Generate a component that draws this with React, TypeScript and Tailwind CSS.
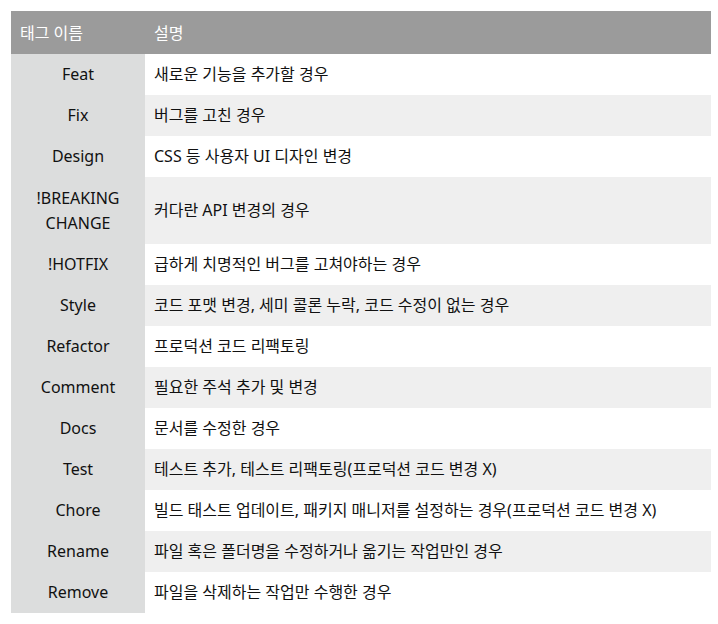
import React from "react";

const rows: { tag: string[]; desc: string }[] = [
  { tag: ["Feat"], desc: "새로운 기능을 추가할 경우" },
  { tag: ["Fix"], desc: "버그를 고친 경우" },
  { tag: ["Design"], desc: "CSS 등 사용자 UI 디자인 변경" },
  { tag: ["!BREAKING", "CHANGE"], desc: "커다란 API 변경의 경우" },
  { tag: ["!HOTFIX"], desc: "급하게 치명적인 버그를 고쳐야하는 경우" },
  { tag: ["Style"], desc: "코드 포맷 변경, 세미 콜론 누락, 코드 수정이 없는 경우" },
  { tag: ["Refactor"], desc: "프로덕션 코드 리팩토링" },
  { tag: ["Comment"], desc: "필요한 주석 추가 및 변경" },
  { tag: ["Docs"], desc: "문서를 수정한 경우" },
  { tag: ["Test"], desc: "테스트 추가, 테스트 리팩토링(프로덕션 코드 변경 X)" },
  { tag: ["Chore"], desc: "빌드 태스트 업데이트, 패키지 매니저를 설정하는 경우(프로덕션 코드 변경 X)" },
  { tag: ["Rename"], desc: "파일 혹은 폴더명을 수정하거나 옮기는 작업만인 경우" },
  { tag: ["Remove"], desc: "파일을 삭제하는 작업만 수행한 경우" },
];

export default function App() {
  return (
    <div
      className="bg-white w-[718px] h-[624px] pt-[11px] pl-[11px] text-[16px] text-[#111]"
      style={{ fontFamily: '"Noto Sans", "Noto Sans CJK KR", sans-serif' }}
    >
      <div className="w-[700px] flex flex-col">
        <div className="flex h-[43px] bg-[#9b9b9b] text-white items-center">
          <div className="w-[134px] pl-[9px]">태그 이름</div>
          <div className="pl-[9px]">설명</div>
        </div>
        {rows.map((r, i) => (
          <div key={i} className="flex">
            <div
              className={`w-[134px] bg-[#dcdddd] flex flex-col items-center justify-center leading-[25px] ${
                r.tag.length > 1 ? "h-[67px]" : "h-[41px]"
              }`}
            >
              {r.tag.map((t, j) => (
                <div key={j}>{t}</div>
              ))}
            </div>
            <div
              className={`flex-1 flex items-center pl-[9px] leading-[25px] ${
                i % 2 === 0 ? "bg-white" : "bg-[#efefef]"
              }`}
            >
              {r.desc}
            </div>
          </div>
        ))}
      </div>
    </div>
  );
}
